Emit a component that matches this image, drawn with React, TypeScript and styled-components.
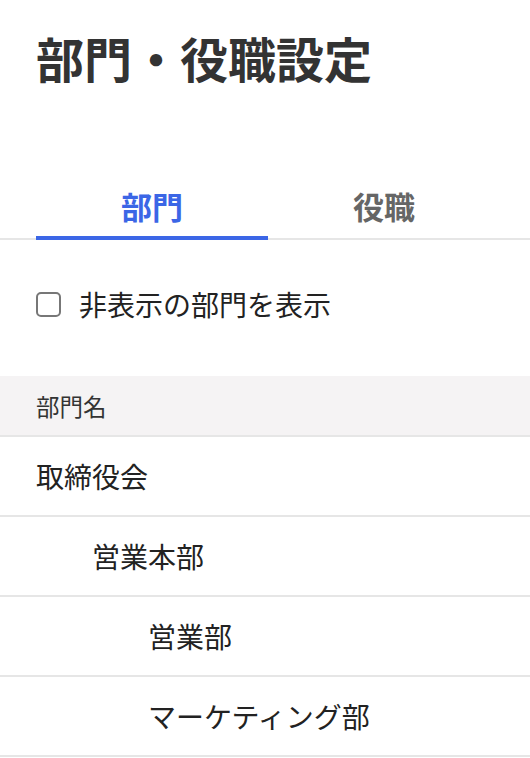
import React, { useState } from 'react';
import styled, { createGlobalStyle } from 'styled-components';

const GlobalStyle = createGlobalStyle`
  html, body {
    margin: 0;
    padding: 0;
    background: #ffffff;
  }
  body {
    font-family: "Noto Sans CJK JP", "Noto Sans", sans-serif;
    color: #222222;
  }
`;

const Page = styled.div`
  width: 530px;
  overflow: hidden;
`;

const Title = styled.h1`
  margin: 0;
  padding: 27px 36px 0;
  font-size: 48px;
  line-height: 60px;
  font-weight: 700;
  color: #333333;
`;

const TabBar = styled.div`
  display: flex;
  margin-top: 86px;
  padding: 0 30px 0 36px;
  border-bottom: 2px solid #e6e6e6;
`;

const Tab = styled.button<{ $active?: boolean }>`
  box-sizing: border-box;
  flex: 0 0 232px;
  padding: 12px 0 9px;
  margin-bottom: -2px;
  border: none;
  border-bottom: 4px solid ${(p) => (p.$active ? '#3b66e6' : 'transparent')};
  background: none;
  font-family: inherit;
  font-size: 31px;
  line-height: 42px;
  font-weight: 700;
  color: ${(p) => (p.$active ? '#3b66e6' : '#666666')};
  cursor: pointer;
`;

const CheckRow = styled.label`
  display: flex;
  align-items: center;
  gap: 18px;
  margin-top: 45px;
  padding: 0 36px;
  font-size: 28px;
  line-height: 39px;
  color: #222222;
  cursor: pointer;
`;

const Box = styled.span<{ $checked: boolean }>`
  width: 21px;
  height: 21px;
  border: 2px solid #777777;
  border-radius: 5px;
  background: ${(p) => (p.$checked ? '#3b66e6' : '#ffffff')};
  flex-shrink: 0;
`;

const Table = styled.div`
  margin-top: 52px;
`;

const HeadRow = styled.div`
  display: flex;
  align-items: center;
  height: 59px;
  padding: 0 36px;
  background: #f5f3f4;
  border-bottom: 2px solid #e6e6e6;
  font-size: 23.5px;
  color: #333333;
`;

const Row = styled.div<{ $depth: number }>`
  display: flex;
  align-items: center;
  height: 78px;
  padding-left: ${(p) => 36 + p.$depth * 56}px;
  border-bottom: 2px solid #e6e6e6;
  font-size: 28px;
  color: #222222;
`;

const departments = [
  { name: '取締役会', depth: 0 },
  { name: '営業本部', depth: 1 },
  { name: '営業部', depth: 2 },
  { name: 'マーケティング部', depth: 2 },
];

export default function App() {
  const [tab, setTab] = useState<'dept' | 'role'>('dept');
  const [showHidden, setShowHidden] = useState(false);

  return (
    <Page>
      <GlobalStyle />
      <Title>部門・役職設定</Title>
      <TabBar>
        <Tab $active={tab === 'dept'} onClick={() => setTab('dept')}>
          部門
        </Tab>
        <Tab $active={tab === 'role'} onClick={() => setTab('role')}>
          役職
        </Tab>
      </TabBar>
      <CheckRow onClick={() => setShowHidden((v) => !v)}>
        <Box $checked={showHidden} />
        非表示の部門を表示
      </CheckRow>
      <Table>
        <HeadRow>部門名</HeadRow>
        {departments.map((d) => (
          <Row key={d.name} $depth={d.depth}>
            {d.name}
          </Row>
        ))}
      </Table>
    </Page>
  );
}
